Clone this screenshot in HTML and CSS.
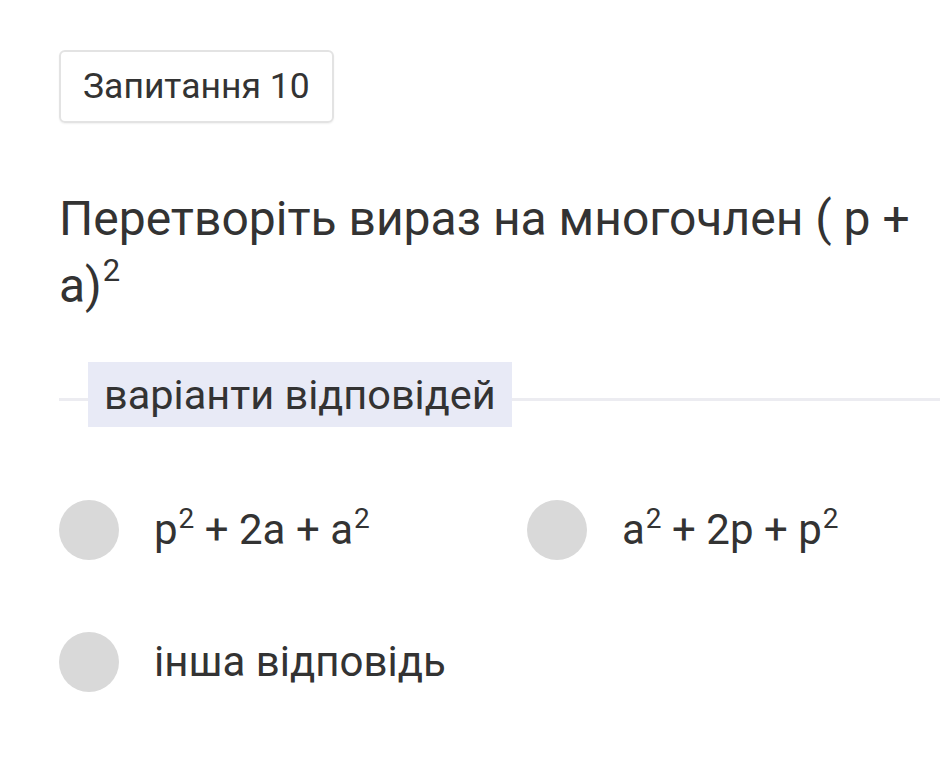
FILE: index.html
```html
<!DOCTYPE html>
<html lang="uk">
<head>
<meta charset="utf-8">
<link rel="stylesheet" href="styles.css">
</head>
<body>
<div class="page">
  <div class="tag">Запитання 10</div>
  <h1 class="question">Перетворіть вираз на многочлен ( p + a)<sup>2</sup></h1>
  <div class="divider"><span class="label">варіанти відповідей</span></div>
  <div class="options">
    <div class="option"><span class="radio"></span><span class="text">p<sup>2</sup> + 2a + a<sup>2</sup></span></div>
    <div class="option"><span class="radio"></span><span class="text">a<sup>2</sup> + 2p + p<sup>2</sup></span></div>
    <div class="option"><span class="radio"></span><span class="text">інша відповідь</span></div>
  </div>
</div>
</body>
</html>
```
FILE: styles.css
```css
html, body {
  margin: 0;
  padding: 0;
  background: #ffffff;
}
body {
  font-family: Roboto, "Noto Sans", sans-serif;
  color: #333333;
}
.page {
  padding: 50px 0 0 59px;
}
.tag {
  display: inline-block;
  box-sizing: border-box;
  height: 73px;
  padding: 0 22px 0 22px;
  border: 2px solid #e3e3e3;
  border-radius: 6px;
  box-shadow: 0 1px 2px rgba(0,0,0,0.06);
  font-size: 35.5px;
  line-height: 69px;
}
.question {
  margin: 62px 0 0 0;
  font-weight: 400;
  font-size: 48px;
  line-height: 67px;
  padding-right: 10px;
}
.question sup {
  font-size: 31px;
  line-height: 0;
  vertical-align: 21px;
  margin-left: 1px;
}
.divider {
  margin-top: 43px;
  display: flex;
  align-items: center;
  position: relative;
  height: 65px;
}
.divider::before {
  content: "";
  position: absolute;
  left: 0;
  right: 0;
  top: 36px;
  height: 3px;
  background: #ececf1;
}
.label {
  position: relative;
  margin-left: 29px;
  background: #e8eaf6;
  padding: 0 16px;
  font-size: 41.5px;
  line-height: 65px;
}
.options {
  margin-top: 73px;
  display: grid;
  grid-template-columns: 468px 1fr;
  row-gap: 72px;
}
.option {
  display: flex;
  align-items: center;
  height: 60px;
}
.radio {
  width: 60px;
  height: 60px;
  border-radius: 50%;
  background: #d9d9d9;
  flex: none;
}
.text {
  margin-left: 35px;
  font-size: 42px;
  line-height: 60px;
}
.text sup {
  font-size: 28px;
  line-height: 0;
  vertical-align: 16px;
  margin-left: 1px;
}
```
